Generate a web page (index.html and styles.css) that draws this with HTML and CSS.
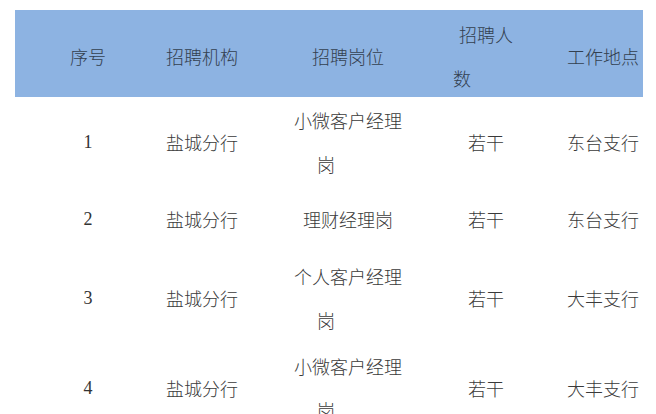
FILE: index.html
```html
<!DOCTYPE html>
<html lang="zh">
<head>
<meta charset="utf-8">
<link rel="stylesheet" href="styles.css">
</head>
<body>
<div class="table">
  <div class="row head">
    <div class="cell">序号</div>
    <div class="cell">招聘机构</div>
    <div class="cell">招聘岗位</div>
    <div class="cell"><span class="line">招聘人</span><span class="line left">数</span></div>
    <div class="cell c5">工作地点</div>
  </div>
  <div class="row r1">
    <div class="cell num">1</div>
    <div class="cell">盐城分行</div>
    <div class="cell"><span class="line">小微客户经理</span><span class="line tail">岗</span></div>
    <div class="cell">若干</div>
    <div class="cell c5">东台支行</div>
  </div>
  <div class="row r2">
    <div class="cell num">2</div>
    <div class="cell">盐城分行</div>
    <div class="cell">理财经理岗</div>
    <div class="cell">若干</div>
    <div class="cell c5">东台支行</div>
  </div>
  <div class="row r3">
    <div class="cell num">3</div>
    <div class="cell">盐城分行</div>
    <div class="cell"><span class="line">个人客户经理</span><span class="line tail">岗</span></div>
    <div class="cell">若干</div>
    <div class="cell c5">大丰支行</div>
  </div>
  <div class="row r4">
    <div class="cell num">4</div>
    <div class="cell">盐城分行</div>
    <div class="cell"><span class="line">小微客户经理</span><span class="line tail">岗</span></div>
    <div class="cell">若干</div>
    <div class="cell c5">大丰支行</div>
  </div>
</div>
</body>
</html>
```

FILE: styles.css
```css
html, body {
  margin: 0;
  padding: 0;
  background: #ffffff;
}
body {
  font-family: "Noto Sans CJK SC", "Noto Sans", sans-serif;
  font-weight: 300;
  font-size: 18px;
  color: #3a3a3a;
  overflow: hidden;
}
.table {
  margin: 10px 0 0 15px;
  width: 628px;
  display: flex;
  flex-direction: column;
}
.row {
  display: grid;
  grid-template-columns: 146px 82px 210px 66px 124px;
}
.head {
  background: #8db3e2;
  height: 87px;
  color: #33404f;
}
.r1 { height: 90px; }
.r2 { height: 64px; }
.r3 { height: 93px; }
.r4 { height: 84px; }
.cell {
  display: flex;
  flex-direction: column;
  justify-content: center;
  text-align: center;
  line-height: 44px;
  white-space: nowrap;
}
.head .cell {
  padding-top: 2px;
}
.line {
  display: block;
}
.left {
  text-align: left;
}
.tail {
  text-align: left;
  padding-left: 74px;
}
.c5 {
  padding-left: 44px;
}
.num {
  font-family: "Liberation Serif", "Times New Roman", serif;
  font-weight: 400;
  color: #333333;
}
```
